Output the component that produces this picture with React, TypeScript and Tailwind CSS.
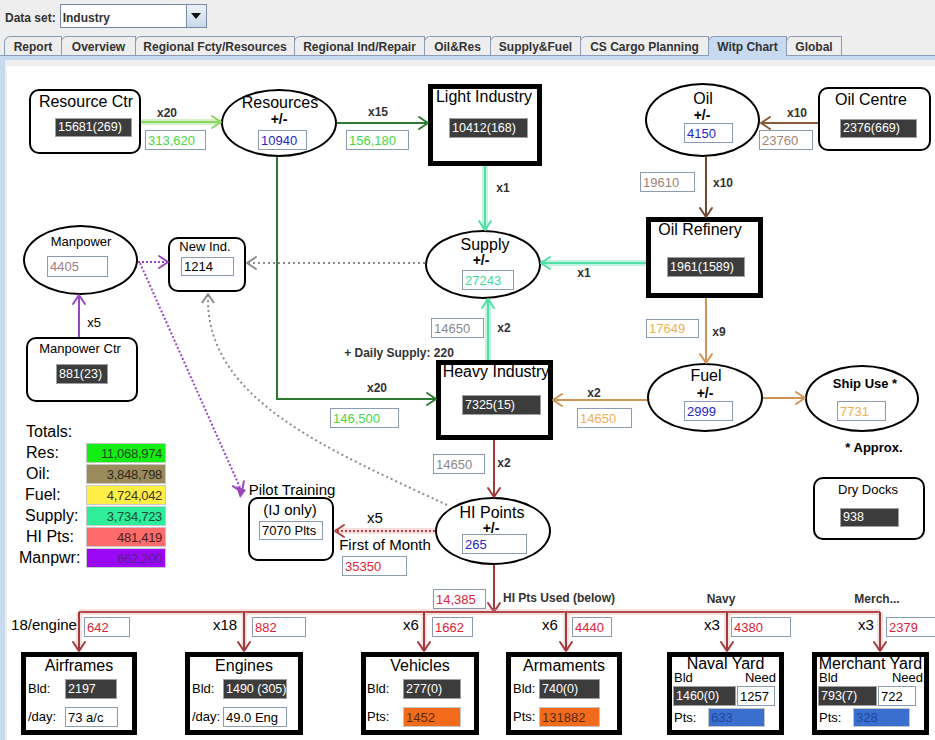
import React from "react";

// canvas origin in page coordinates; every node below is given in page coords
const CX = 7;
const CY = 66;

const DARK = "bg-[#3c3c3c] border-[#a0a0a0] text-white text-[12.5px]";
const WH = "bg-white border-[#8c9cb0] text-[13px] ";
const GREEN_T = WH + "text-[#45d845]";
const BLUE_T = WH + "text-[#2424c8]";
const BRN_T = WH + "text-[#a08474]";
const GRAY_T = WH + "text-[#8a8a8a]";
const OR_T = WH + "text-[#f0b050]";
const RED_T = WH + "text-[#dc2238]";
const BLK_T = WH + "text-black";
const ORANGE = "bg-[#f26a1b] border-[#c4c4c4] text-[#5a2a10] text-[13px]";
const BLUEBG = "bg-[#3b6fcf] border-[#c4c4c4] text-[#1e4a9a] text-[13px]";

type Fld = [number, number, number, number, string, string];

// text fields that float on the chart
const fields: Fld[] = [
    [55, 118, 77, 19, "15681(269)", DARK],
    [449, 118, 79, 20, "10412(168)", DARK],
    [840, 119, 77, 19, "2376(669)", DARK],
    [667, 257, 78, 20, "1961(1589)", DARK],
    [56, 364, 52, 20, "881(23)", DARK],
    [462, 395, 79, 20, "7325(15)", DARK],
    [840, 508, 59, 19, "938", DARK],

    [145, 130, 61, 20, "313,620", GREEN_T],
    [258, 130, 49, 20, "10940", BLUE_T],
    [346, 130, 63, 20, "156,180", GREEN_T],
    [684, 123, 49, 20, "4150", BLUE_T],
    [759, 130, 54, 20, "23760", BRN_T],
    [640, 172, 55, 20, "19610", BRN_T],
    [462, 270, 52, 20, "27243", WH + "text-[#3ddc9c]"],
    [47, 256, 61, 21, "4405", WH + "text-[#a08080]"],
    [181, 257, 53, 19, "1214", BLK_T],
    [431, 318, 53, 20, "14650", GRAY_T],
    [330, 408, 69, 20, "146,500", GREEN_T],
    [646, 319, 53, 19, "17649", OR_T],
    [577, 408, 55, 20, "14650", OR_T],
    [684, 401, 49, 20, "2999", BLUE_T],
    [837, 401, 49, 20, "7731", OR_T],
    [259, 521, 64, 19, "7070 Plts", BLK_T],
    [342, 556, 65, 20, "35350", RED_T],
    [433, 454, 52, 20, "14650", GRAY_T],
    [462, 534, 65, 20, "265", BLUE_T],
    [433, 589, 53, 20, "14,385", RED_T],
    [84, 617, 46, 20, "642", RED_T],
    [252, 617, 54, 20, "882", RED_T],
    [432, 617, 41, 20, "1662", RED_T],
    [572, 617, 40, 20, "4440", RED_T],
    [731, 617, 60, 20, "4380", RED_T],
    [886, 617, 52, 20, "2379", RED_T],
];

const ELL = "rounded-[50%] border-2 border-black bg-white";
const RND = "rounded-[10px] border-2 border-black bg-white";
const THK = "border-[5px] border-black bg-white";

const shapes: [number, number, number, number, string][] = [
    [29, 89, 112, 65, RND],
    [221, 89, 116, 68, ELL],
    [428, 84, 114, 82, THK],
    [645, 83, 115, 74, ELL],
    [818, 87, 113, 64, RND],
    [646, 217, 117, 81, THK],
    [425, 230, 116, 69, ELL],
    [23, 225, 115, 70, ELL],
    [168, 237, 78, 55, RND],
    [26, 337, 112, 65, RND],
    [436, 360, 117, 80, THK],
    [647, 363, 116, 69, ELL],
    [805, 365, 114, 67, ELL],
    [813, 477, 112, 63, RND],
    [248, 497, 86, 64, RND],
    [435, 497, 116, 68, ELL],
];

const T16 = "text-[16px] text-black";
const T15 = "text-[15px] text-black";
const T13 = "text-[13px] text-black";
const B12 = "text-[12px] font-bold text-[#333]";
const PM = "text-[14px] font-bold text-black";
const B13 = "text-[13px] font-bold text-black";

const labels: [number, number, string, string][] = [
    [86, 102, "Resource Ctr", T16],
    [167, 113, "x20", B12],
    [280, 103, "Resources", T16],
    [279, 119, "+/-", PM],
    [378, 112, "x15", B12],
    [484, 97, "Light Industry", T16],
    [503, 188, "x1", B12],
    [703, 99, "Oil", T16],
    [702, 115, "+/-", PM],
    [797, 113, "x10", B12],
    [871, 100, "Oil Centre", T16],
    [723, 183, "x10", B12],
    [700, 230, "Oil Refinery", T16],
    [485, 245, "Supply", T16],
    [481, 260, "+/-", PM],
    [584, 273, "x1", B12],
    [81, 241, "Manpower", T13],
    [205, 246, "New Ind.", T13],
    [94, 322, "x5", T13],
    [80, 348, "Manpower Ctr", T13],
    [504, 328, "x2", B12],
    [399, 353, "+ Daily Supply: 220", B12],
    [496, 372, "Heavy Industry", T16],
    [377, 388, "x20", B12],
    [594, 393, "x2", B12],
    [719, 332, "x9", B12],
    [706, 376, "Fuel", T16],
    [705, 393, "+/-", PM],
    [865, 383, "Ship Use *", B13],
    [874, 447, "* Approx.", B13],
    [868, 489, "Dry Docks", T13],
    [292, 489, "Pilot Training", T15],
    [290, 509, "(IJ only)", T15],
    [375, 517, "x5", T15],
    [385, 544, "First of Month", T15],
    [492, 513, "HI Points", T16],
    [491, 528, "+/-", PM],
    [504, 463, "x2", B12],
    [559, 598, "HI Pts Used (below)", B12],
    [721, 599, "Navy", B12],
    [877, 599, "Merch...", B12],
    [44, 624, "18/engine", T15],
    [225, 624, "x18", T15],
    [411, 624, "x6", T15],
    [550, 624, "x6", T15],
    [712, 624, "x3", T15],
    [866, 624, "x3", T15],
];

const totals: [string, string, string, string][] = [
    ["Res:", "11,068,974", "bg-[#14ee14] text-[#1f4a1f]", "pl-[7px]"],
    ["Oil:", "3,848,798", "bg-[#9b8a5c] text-[#2e2a20]", "pl-[7px]"],
    ["Fuel:", "4,724,042", "bg-[#ffee44] text-[#3a3620]", "pl-[6px]"],
    ["Supply:", "3,734,723", "bg-[#2eee9a] text-[#1f4a36]", "pl-[6px]"],
    ["HI Pts:", "481,419", "bg-[#ff6a6a] text-[#4a1f1f]", "pl-[7px]"],
    ["Manpwr:", "662,200", "bg-[#9a08f6] text-[#55228a]", "pl-0"],
];

const G1 = "#8bd65e";
const DG = "#2f7a33";
const MINT = "#4fe0a5";
const TAN = "#cf9355";
const RED = "#a33a3a";
const PUR = "#9a45c0";
const GR = "#8c8c8c";

type Edge = { pts: number[][]; c: string; dash?: string; glow?: string; head?: boolean };

const edges: Edge[] = [
    { pts: [[141, 122], [221, 122]], c: G1, glow: G1 },
    { pts: [[337, 123], [428, 123]], c: DG },
    { pts: [[485, 166], [485, 230]], c: MINT, glow: MINT },
    { pts: [[818, 123], [761, 123]], c: "#8a5a3a" },
    { pts: [[706, 157], [706, 217]], c: "#6e4a30" },
    { pts: [[646, 263], [541, 263]], c: MINT, glow: MINT },
    { pts: [[425, 263], [247, 263]], c: GR, dash: "2 3" },
    { pts: [[138, 262], [168, 262]], c: PUR, dash: "2 2" },
    { pts: [[140, 263], [242, 492]], c: PUR, dash: "2 2" },
    { pts: [[79, 337], [79, 295]], c: PUR },
    { pts: [[277, 157], [277, 399], [436, 399]], c: DG },
    { pts: [[488, 360], [488, 299]], c: MINT, glow: MINT },
    { pts: [[706, 298], [706, 363]], c: TAN },
    { pts: [[647, 400], [553, 400]], c: TAN },
    { pts: [[763, 398], [805, 398]], c: TAN },
    { pts: [[494, 440], [494, 497]], c: RED },
    { pts: [[435, 531], [335, 531]], c: "#b04444", dash: "2 2", glow: "#e8a0a0" },
    { pts: [[494, 565], [494, 612]], c: RED },
    { pts: [[79, 612], [880, 612]], c: "#b04848", glow: "#e8a8a8", head: false },
    ...[79, 244, 424, 566, 727, 880].map((x) => ({ pts: [[x, 612], [x, 651]], c: RED, glow: "#e8b0b0" })),
];

function headPoints(x1: number, y1: number, x2: number, y2: number) {
    const len = Math.hypot(x2 - x1, y2 - y1);
    const ux = (x2 - x1) / len, uy = (y2 - y1) / len;
    const bx = x2 - ux * 9, by = y2 - uy * 9;
    return `${bx - uy * 6},${by + ux * 6} ${x2},${y2} ${bx + uy * 6},${by - ux * 6}`;
}

function Arrow({ e }: { e: Edge }) {
    const d = e.pts.map((p, i) => (i ? "L" : "M") + p[0] + " " + p[1]).join(" ");
    const [x1, y1] = e.pts[e.pts.length - 2];
    const [x2, y2] = e.pts[e.pts.length - 1];
    return (
        <g fill="none">
            {e.glow && <path d={d} stroke={e.glow} strokeWidth={6} opacity={0.35} />}
            <path d={d} stroke={e.c} strokeWidth={2} strokeDasharray={e.dash} />
            {e.head !== false && (
                <polyline points={headPoints(x1, y1, x2, y2)} stroke={e.c} strokeWidth={2} strokeLinejoin="round" strokeLinecap="round" />
            )}
        </g>
    );
}

function Box({ v, cls, w, h = "h-[20px]" }: { v: string; cls: string; w: string; h?: string }) {
    return <div className={"flex items-center overflow-hidden whitespace-nowrap border pl-[2px] leading-none " + cls + " " + w + " " + h}>{v}</div>;
}

// factory output boxes along the bottom: title, then label / field rows
function Plant({ x, title, cols, pl, rows }: { x: number; title: string; cols: string; pl: string; rows: [string, string, string, string][] }) {
    return (
        <div className={"absolute flex h-[83px] flex-col border-[5px] border-black bg-white pt-[1px] " + (title === "Engines" || title === "Vehicles" ? "w-[118px]" : "w-[116px]")}
             style={{ left: x - CX, top: 652 - CY }}>
            <div className="text-center text-[16px] leading-[16px] text-black">{title}</div>
            <div className={"mt-[5px] grid gap-y-[8px] " + cols + " " + pl}>
                {rows.map(([l, v, cls, w]) => (
                    <React.Fragment key={l}>
                        <span className="self-center text-[13px] text-black">{l}</span>
                        <Box v={v} cls={cls} w={w} />
                    </React.Fragment>
                ))}
            </div>
        </div>
    );
}

function Yard({ x, title, need, bld, needV, pts, bw, nw, pw, needCls }: {
    x: number; title: string; need: string; bld: string; needV: string; pts: string; bw: string; nw: string; pw: string; needCls: string;
}) {
    return (
        <div className="absolute flex h-[83px] w-[117px] flex-col border-[5px] border-black bg-white" style={{ left: x - CX, top: 652 - CY }}>
            <div className="text-center text-[16px] leading-[14px] text-black">{title}</div>
            <div className="flex h-[13px] items-center justify-between pl-[2px] pr-[1px] text-[13px] leading-none text-black">
                <span>Bld</span>
                <span className={needCls}>{need}</span>
            </div>
            <div className="mt-[2px] flex gap-[1px] pl-[1px]">
                <Box v={bld} cls={DARK} w={bw} />
                <Box v={needV} cls={BLK_T} w={nw} />
            </div>
            <div className="mt-[2px] flex items-center pl-[2px]">
                <span className="w-[34px] text-[13px] text-black">Pts:</span>
                <Box v={pts} cls={BLUEBG} w={pw} h="h-[19px]" />
            </div>
        </div>
    );
}

function Lbl({ x, y, t, cls }: { x: number; y: number; t: string; cls: string }) {
    return (
        <div className={"absolute -translate-x-1/2 -translate-y-1/2 whitespace-nowrap leading-none " + cls} style={{ left: x - CX, top: y - CY }}>
            {t}
        </div>
    );
}

const tabs: [string, string][] = [
    ["Report", "w-[58px]"],
    ["Overview", "w-[75px]"],
    ["Regional Fcty/Resources", "w-[160px]"],
    ["Regional Ind/Repair", "w-[131px]"],
    ["Oil&Res", "w-[67px]"],
    ["Supply&Fuel", "w-[91px]"],
    ["CS Cargo Planning", "w-[129px]"],
    ["Witp Chart", "w-[79px]"],
    ["Global", "w-[56px]"],
];

export default function App() {
    return (
        <div className="h-[740px] w-[935px] overflow-hidden bg-[#eeeeee] font-['Liberation_Sans',Arial,sans-serif]">
            <div className="flex h-[33px] items-start gap-[4px] pl-[5px] pt-[4px]">
                <span className="mt-[5px] text-[12px] font-bold text-[#333]">Data set:</span>
                <div className="flex h-[24px] w-[147px] border border-[#7a8aa6] bg-white">
                    <span className="flex-1 pl-[2px] pt-[4px] text-[12px] font-bold text-[#333]">Industry</span>
                    <div className="flex w-[20px] items-center justify-center border-l border-[#7a8aa6] bg-gradient-to-b from-[#eef3f9] to-[#c8d8ea]">
                        <svg width="10" height="6" viewBox="0 0 10 6"><path d="M0 0h10L5 6z" fill="#111" /></svg>
                    </div>
                </div>
            </div>

            <div className="flex h-[22px] items-end pl-[4px]">
                {tabs.map(([t, w]) => {
                    const sel = t === "Witp Chart";
                    return (
                        <div
                            key={t}
                            className={
                                "relative -mr-px flex items-center justify-center rounded-tl-[6px] border border-b-0 border-[#8c9cb6] pt-[1px] text-[12px] font-bold text-[#333] " +
                                w +
                                (sel ? " z-10 -mb-px h-[20px] bg-[#c7daef]" : " h-[19px] bg-[#eeeeee]")
                            }
                        >
                            {t}
                        </div>
                    );
                })}
            </div>

            <div className="h-[685px] border-t border-[#8c9cb6] bg-[#c7daef] pl-[5px] pt-[4px]">
                <div className="h-full bg-[#eeeeee] pl-[2px] pt-[6px]">
                    <div className="relative h-full overflow-hidden bg-white">
                        {shapes.map(([x, y, w, h, cls], i) => (
                            <div key={i} className={"absolute " + cls} style={{ left: x - CX, top: y - CY, width: w, height: h }} />
                        ))}

                        <svg className="pointer-events-none absolute left-0 top-0" width={935} height={680}>
                            <g transform={`translate(${-CX},${-CY})`}>
                                {edges.map((e, i) => (
                                    <Arrow key={i} e={e} />
                                ))}
                                <path d="M447 505 C330 450 205 400 208 296" stroke={GR} strokeWidth={2} strokeDasharray="2 3" fill="none" />
                                <polyline points={headPoints(208, 305, 208, 294)} stroke={GR} strokeWidth={2} fill="none" strokeLinejoin="round" />
                                <path d="M236 486 L246 490 L240 498 Z" fill={PUR} />
                            </g>
                        </svg>

                        {labels.map(([x, y, t, cls], i) => (
                            <Lbl key={"l" + i} x={x} y={y} t={t} cls={cls} />
                        ))}

                        <div className="absolute grid grid-cols-[67px_80px] gap-y-[1px] text-[16px] leading-none text-black" style={{ left: 19 - CX, top: 422 - CY }}>
                            <span className="col-span-2 flex h-[20px] items-center pl-[7px]">Totals:</span>
                            {totals.map(([l, v, cls, pl]) => (
                                <React.Fragment key={l}>
                                    <span className={"flex h-[20px] items-center " + pl}>{l}</span>
                                    <div className={"flex h-[20px] items-center justify-end border border-[#c8c8c8] pr-[3px] text-[13px] tracking-[-0.3px] " + cls}>{v}</div>
                                </React.Fragment>
                            ))}
                        </div>

                        {fields.map(([x, y, w, h, v, cls], i) => (
                            <div
                                key={"f" + i}
                                className={"absolute flex items-center overflow-hidden whitespace-nowrap border pl-[2px] leading-none " + cls}
                                style={{ left: x - CX, top: y - CY, width: w, height: h }}
                            >
                                {v}
                            </div>
                        ))}

                        <Plant x={21} title="Airframes" cols="grid-cols-[37px_52px]" pl="pl-[2px]"
                               rows={[["Bld:", "2197", DARK, "w-[52px]"], ["/day:", "73 a/c", BLK_T, "w-[53px]"]]} />
                        <Plant x={185} title="Engines" cols="grid-cols-[31px_64px]" pl="pl-[2px]"
                               rows={[["Bld:", "1490 (305)", DARK, "w-[64px]"], ["/day:", "49.0 Eng", BLK_T, "w-[64px]"]]} />
                        <Plant x={361} title="Vehicles" cols="grid-cols-[36px_58px]" pl="pl-[1px]"
                               rows={[["Bld:", "277(0)", DARK, "w-[58px]"], ["Pts:", "1452", ORANGE, "w-[58px]"]]} />
                        <Plant x={506} title="Armaments" cols="grid-cols-[26px_61px]" pl="pl-[2px]"
                               rows={[["Bld:", "740(0)", DARK, "w-[61px]"], ["Pts:", "131882", ORANGE, "w-[61px]"]]} />
                        <Yard x={667} title="Naval Yard" need="Need" bld="1460(0)" needV="1257" pts="633"
                              bw="w-[63px]" nw="w-[38px]" pw="w-[57px]" needCls="mr-[2px]" />
                        <Yard x={812} title="Merchant Yard" need="Need" bld="793(7)" needV="722" pts="328"
                              bw="w-[59px]" nw="w-[38px]" pw="w-[57px]" needCls="mr-0" />
                    </div>
                </div>
            </div>
        </div>
    );
}
